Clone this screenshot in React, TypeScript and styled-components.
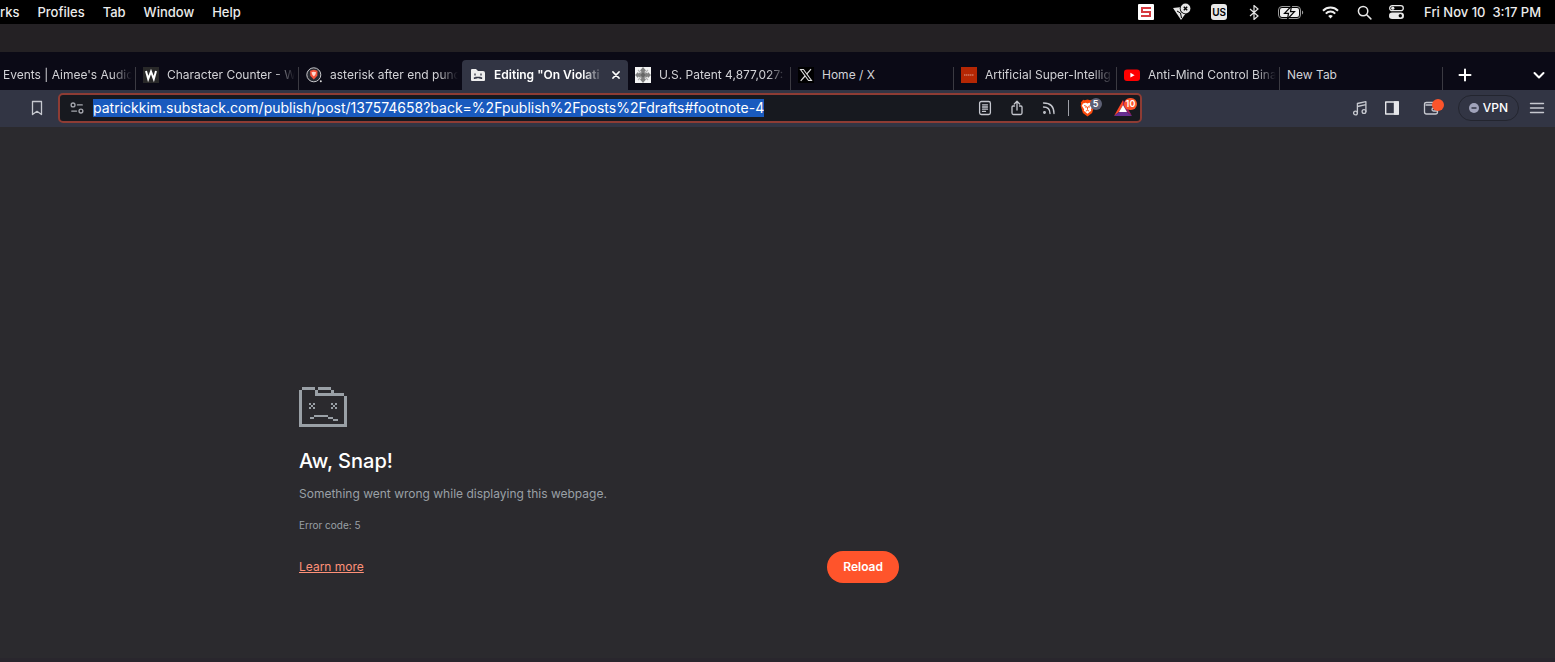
import React from "react";
import styled, { createGlobalStyle } from "styled-components";

const GlobalStyle = createGlobalStyle`
  * { box-sizing: border-box; }
  body {
    margin: 0;
    background: #2b2a2e;
    font-family: Inter, "Liberation Sans", sans-serif;
    color: #fff;
  }
  button, input { font: inherit; color: inherit; border: 0; background: none; padding: 0; margin: 0; }
  svg { display: block; flex: none; }
`;

const Screen = styled.div`
  display: flex;
  flex-direction: column;
  min-height: 100vh;
  border-bottom: 4px solid #29262d;
`;

const MenuBar = styled.header`
  display: flex;
  align-items: center;
  justify-content: space-between;
  height: 24px;
  padding-right: 14px;
  background: #000;
  color: #ececec;
  font-size: 13px;
  line-height: 16px;
  font-weight: 500;
  white-space: nowrap;
`;

const Menus = styled.nav`
  display: flex;
  gap: 18px;
`;

const MenuButton = styled.button`
  cursor: default;
`;

const StatusItems = styled.div`
  display: flex;
  align-items: center;
`;

const StatusItem = styled.span<{ $w: number }>`
  display: flex;
  justify-content: center;
  width: ${(p) => p.$w}px;
`;

const Clock = styled.time`
  white-space: pre;
  margin-left: 12px;
`;

const InputSource = styled.span`
  width: 16px;
  height: 16px;
  border-radius: 3px;
  background: #e8e8e8;
  color: #000;
  font-size: 10px;
  line-height: 17px;
  font-weight: 600;
  text-align: center;
`;

const TitleGap = styled.div`
  height: 28px;
  background: #242124;
`;

const TabStrip = styled.div`
  display: flex;
  height: 38px;
  padding-top: 8px;
  background: #0b0a16;
`;

const Tabs = styled.div`
  display: flex;
  flex: 1;
  min-width: 0;
`;

const Tab = styled.button<{ $active?: boolean; $clipped?: boolean; $edge?: boolean }>`
  position: relative;
  display: flex;
  align-items: center;
  gap: 8px;
  flex: ${(p) => (p.$clipped ? "0 0 136px" : p.$active ? "1 1 14px" : "1 1 0")};
  min-width: 0;
  height: 30px;
  padding: 0 4px 0 ${(p) => (p.$clipped ? 3 : p.$active ? 8 : 7)}px;
  border-radius: ${(p) => (p.$active ? "4px 4px 0 0" : "0")};
  background: ${(p) => (p.$active ? "#323544" : "transparent")};
  color: ${(p) => (p.$active ? "#fff" : "#d2d2d6")};
  font-size: 12px;
  line-height: 16px;
  font-weight: ${(p) => (p.$active ? 600 : 400)};
  text-align: left;

  &::after {
    content: "";
    display: ${(p) => (p.$edge ? "block" : "none")};
    position: absolute;
    right: 0;
    top: 7px;
    bottom: 0;
    width: 1px;
    background: #3b3a42;
  }
`;

const TabTitle = styled.span<{ $fade?: boolean }>`
  flex: 1;
  min-width: 0;
  overflow: hidden;
  white-space: nowrap;
  mask-image: ${(p) =>
    p.$fade ? "linear-gradient(to left, transparent, #000 20px)" : "none"};
`;

const CloseMark = styled.span`
  padding: 0 3px 0 0;
`;

const StripActions = styled.div`
  display: flex;
  align-items: center;
  justify-content: space-between;
  width: 112px;
  height: 30px;
  padding: 0 8px 0 14px;
`;

const IconButton = styled.button`
  display: flex;
  align-items: center;
  justify-content: center;
`;

const Toolbar = styled.div`
  display: flex;
  align-items: center;
  height: 37px;
  padding: 0 10px 1px 29px;
  background: #323544;
`;

const AddressBar = styled.div`
  display: flex;
  align-items: center;
  flex: 1083 1 0;
  min-width: 0;
  height: 30px;
  margin-left: 13px;
  padding: 0 2px 0 10px;
  border: 2px solid #8e3c34;
  border-radius: 5px;
  background: #17191f;
`;

const AddressInput = styled.input`
  field-sizing: content;
  min-width: 0;
  height: 18px;
  margin-left: 9px;
  background: #195abe;
  color: #fff;
  font-size: 14px;
  line-height: 18px;
  font-weight: 400;
  outline: 0;
`;

const AddressActions = styled.div`
  display: flex;
  align-items: center;
  margin-left: auto;
`;

const ActionButton = styled(IconButton)`
  width: 32px;
  height: 26px;
`;

const Divider = styled.span`
  width: 1px;
  height: 16px;
  margin: 0 8px 0 3px;
  background: #9fa1a8;
`;

const Extension = styled.button<{ $w: number }>`
  position: relative;
  display: flex;
  align-items: center;
  width: ${(p) => p.$w}px;
  height: 26px;
  padding-left: 3px;
`;

const Badge = styled.span<{ $bg: string; $left: number }>`
  position: absolute;
  top: 3px;
  left: ${(p) => p.$left}px;
  min-width: 12px;
  height: 12px;
  padding: 0 2px;
  border-radius: 6px;
  background: ${(p) => p.$bg};
  font-size: 9px;
  line-height: 12px;
  font-weight: 600;
  text-align: center;
`;

const ToolbarSpace = styled.div`
  flex: 205 1 0;
`;

const Wallet = styled(IconButton)`
  position: relative;
  width: 46px;
  height: 26px;
`;

const WalletDot = styled.span`
  position: absolute;
  top: 4px;
  left: 24px;
  width: 12px;
  height: 12px;
  border-radius: 6px;
  background: #fb542b;
`;

const VpnButton = styled.button`
  display: flex;
  align-items: center;
  gap: 4px;
  height: 26px;
  margin: 0 10px 0 4px;
  padding: 0 10px;
  border: 1px solid #23252f;
  border-radius: 13px;
  font-size: 12px;
  line-height: 16px;
  font-weight: 500;
  white-space: nowrap;
`;

const ErrorPage = styled.main`
  width: 100%;
  max-width: 899px;
  padding: 260px 0 0 299px;
`;

const Heading = styled.h1`
  margin: 20px 0 0;
  font-size: 20px;
  line-height: 28px;
  font-weight: 500;
`;

const Message = styled.p`
  margin: 10px 0 0;
  color: #9aa0a6;
  font-size: 12px;
  line-height: 18px;
`;

const ErrorCode = styled.p`
  margin: 15px 0 0;
  color: #9aa0a6;
  font-size: 10px;
  line-height: 14px;
`;

const Actions = styled.div`
  display: flex;
  align-items: center;
  justify-content: space-between;
  margin-top: 19px;
`;

const LearnMore = styled.a`
  color: #ff9179;
  font-size: 12px;
  line-height: 16px;
`;

const ReloadButton = styled.button`
  height: 32px;
  padding: 0 16px;
  border-radius: 16px;
  background: #ff542b;
  font-size: 12px;
  line-height: 16px;
  font-weight: 600;
`;

const Stroke = ({ size = 16, children, width = 1.3, color = "#c6c8cf" }: {
  size?: number; children: React.ReactNode; width?: number; color?: string;
}) => (
  <svg width={size} height={size} viewBox="0 0 16 16" fill="none" stroke={color}
    strokeWidth={width} strokeLinecap="round" strokeLinejoin="round" aria-hidden="true">
    {children}
  </svg>
);

const SIcon = () => (
  <svg width="16" height="16" viewBox="0 0 16 16" aria-hidden="true">
    <rect width="16" height="16" rx="1" fill="#fff" />
    <path d="M13 4H4v4h8v4H3" fill="none" stroke="#d63a40" strokeWidth="2" />
  </svg>
);

const FunnelIcon = () => (
  <svg width="19" height="18" viewBox="0 0 19 18" aria-hidden="true">
    <path d="M1 5 10 4l4 6-5 7z" fill="#e4e4e4" />
    <path d="m5 8 3.500 2 1 5" stroke="#000" strokeWidth="1" fill="none" />
    <circle cx="13.5" cy="5.5" r="5.8" fill="#000" />
    <circle cx="13.5" cy="5.5" r="4.9" fill="#e4e4e4" />
    <path d="m11.8 3.8 3.4 3.4m0-3.4-3.4 3.4" stroke="#000" strokeWidth="1.4" />
  </svg>
);

const BatteryIcon = () => (
  <svg width="26" height="13" viewBox="0 0 26 13" aria-hidden="true">
    <rect x=".5" y=".5" width="22" height="12" rx="3.5" fill="none" stroke="#9a9a9a" />
    <rect x="2" y="2" width="19" height="9" rx="2" fill="#eee" />
    <path d="M24 4.5c1.6.5 1.6 3.5 0 4z" fill="#9a9a9a" />
    <path d="m13.5 0-7 7.3h4L9.5 13l7-7.3h-4z" fill="#eee" stroke="#000" strokeWidth="1.2" />
  </svg>
);

const WifiIcon = () => (
  <svg width="17" height="13" viewBox="0 0 17 13" fill="none" stroke="#eee" strokeWidth="2" aria-hidden="true">
    <path d="M1 4.700c4.200-4.200 10.800-4.200 15 0M3.800 7.600c2.700-2.700 6.700-2.700 9.400 0" />
    <path d="m8.500 12.500-2.300-2.600c1.300-1.100 3.300-1.100 4.600 0z" fill="#eee" stroke="none" />
  </svg>
);

const ControlIcon = () => (
  <svg width="15" height="14" viewBox="0 0 15 14" aria-hidden="true">
    <rect x=".7" y=".7" width="13.6" height="5" rx="2.5" fill="none" stroke="#e8e8e8" strokeWidth="1.3" />
    <circle cx="3.8" cy="3.2" r="1.6" fill="#e8e8e8" />
    <rect y="7.5" width="15" height="6.5" rx="3.2" fill="#e8e8e8" />
    <circle cx="11.3" cy="10.7" r="1.7" fill="#000" />
  </svg>
);

const WIcon = () => (
  <svg width="16" height="16" viewBox="0 0 16 16" aria-hidden="true">
    <rect width="16" height="16" fill="#292929" />
    <path d="m3 4 2.200 8L8 4.500l2.800 7.500L13 4" fill="none" stroke="#fff" strokeWidth="2" />
  </svg>
);

const lionPath = "M8 .5 10.500 1l1.300-.3L14 3l-.4 1.200.5 1.800-2 6.500L8 15.500l-4.100-3L1.900 6l.5-1.800L2 3 4.200.7l1.300.3z";

const Lion = () => (
  <svg width="15" height="18" viewBox="1.5 0 13 16" aria-hidden="true">
    <path d={lionPath} fill="#fb4a0c" />
    <path d="m4 4 2.500-.7L8 4l1.500-.7L12 4l1 2-2 3 .3 1.500L8 13l-3.300-2.500L5 9 3 6z" fill="#fff" />
    <path d="m5 5.800 2 .7L6.500 8M11 5.800l-2 .7.5 1.500M8 7v2.500M6.500 10.800 8 10l1.500.8" fill="none" stroke="#fb4a0c" strokeWidth=".8" />
  </svg>
);

const BraveSearchIcon = () => (
  <svg width="16" height="16" viewBox="0 0 16 16" aria-hidden="true">
    <circle cx="7.8" cy="7.8" r="7" fill="#282a32" stroke="#c8c8cc" strokeWidth="1" />
    <path d="m7.800 2.800 3.700 1-.2 5L7.800 12.500l-3.500-3.700-.2-5z" fill="#f4533a" />
    <path d="m5.500 5.300 2.300-.5 2.300.5-.8 2.500-1.500 1.800-1.500-1.800z" fill="#ffd9d0" />
    <circle cx="14.8" cy="14.3" r="1" fill="#ddd" />
  </svg>
);

const SadTabIcon = () => (
  <svg width="16" height="16" viewBox="0 0 16 16" aria-hidden="true">
    <path d="M1 3q0-1 1-1h4l2 2h5q2 0 2 2v7q0 1-1 1H2q-1 0-1-1z" fill="#eee" />
    <path d="M5 6.500v2M11 6.500v2M4.500 12v-1h1.500v-.5h4v.5h1.500v1" stroke="#323544" strokeWidth="1.3" fill="none" />
  </svg>
);

const PatentIcon = () => (
  <svg width="16" height="16" viewBox="0 0 16 16" aria-hidden="true">
    <rect width="16" height="16" fill="#f3f3f3" />
    <path d="m8 0 3 3.500-1.500 1 3 2L13 5l3 3-3 3-.5-1.500-3 2 1.500 1L8 16l-3-3.500 1.500-1-3-2L3 11 0 8l3-3 .5 1.500 3-2-1.500-1z" fill="#808080" />
    <path d="m3 3 10 10m0-10L3 13" stroke="#b4b4b4" strokeWidth="1.2" />
    <circle cx="8" cy="8" r="2.2" fill="#666" />
  </svg>
);

const XIcon = () => (
  <svg width="16" height="16" viewBox="0 0 16 16" aria-hidden="true">
    <rect width="16" height="16" fill="#000" />
    <path d="M2.500 2.500h3l8 11h-3z" fill="none" stroke="#ddd" strokeWidth="1.1" />
    <path d="M13 2.200 8.700 7.100M7 9l-4.300 4.800" stroke="#ddd" strokeWidth="1.2" />
  </svg>
);

const RedIcon = () => (
  <svg width="16" height="16" viewBox="0 0 16 16" aria-hidden="true">
    <rect width="16" height="16" fill="#b52704" />
    <path d="M3 8h10" stroke="#e0a08c" strokeWidth="1.2" strokeDasharray="1.5 .5" />
  </svg>
);

const YouTubeIcon = () => (
  <svg width="16" height="16" viewBox="0 0 16 16" aria-hidden="true">
    <rect y="2.5" width="16" height="11.5" rx="3" fill="#f00" />
    <path d="m6.400 5.800 4.200 2.400-4.200 2.400z" fill="#fff" />
  </svg>
);

const SadFolder = () => (
  <svg width="48" height="40" viewBox="0 0 48 40" fill="#9aa0a6" shapeRendering="crispEdges" aria-hidden="true">
    <path d="M3 0h13v3H3zM19 0h13v3H19zM0 3h3v34h42V9H16V3h3v3h26v3h3v31H0zM32 3h3v3h-3z" />
    <path d="M10 16h2v2h-2zM14 16h2v2h-2zM12 18h2v2h-2zM10 20h2v2h-2zM14 20h2v2h-2z" />
    <path d="M32 16h2v2h-2zM36 16h2v2h-2zM34 18h2v2h-2zM32 20h2v2h-2zM36 20h2v2h-2z" />
    <path d="M15 28h14v2H15zM11 30h4v2h-4zM29 30h5v2h-5zM34 32h5v2h-5z" />
  </svg>
);

const tabs = [
  { title: "Events | Aimee's Audio", clipped: true, fade: true, edge: true },
  { title: "Character Counter - W", icon: <WIcon />, fade: true, edge: true },
  { title: "asterisk after end punc", icon: <BraveSearchIcon />, fade: true },
  { title: "Editing \"On Violati", icon: <SadTabIcon />, fade: true, active: true },
  { title: "U.S. Patent 4,877,027:", icon: <PatentIcon />, fade: true, edge: true },
  { title: "Home / X", icon: <XIcon />, edge: true },
  { title: "Artificial Super-Intellig", icon: <RedIcon />, fade: true, edge: true },
  { title: "Anti-Mind Control Bina", icon: <YouTubeIcon />, fade: true, edge: true },
  { title: "New Tab", edge: true },
];

export default function App() {
  return (
    <Screen>
      <GlobalStyle />
      <MenuBar>
        <Menus>
          {["rks", "Profiles", "Tab", "Window", "Help"].map((m) => (
            <MenuButton key={m}>{m}</MenuButton>
          ))}
        </Menus>
        <StatusItems>
          <StatusItem $w={32}><SIcon /></StatusItem>
          <StatusItem $w={38}><FunnelIcon /></StatusItem>
          <StatusItem $w={38}><InputSource>US</InputSource></StatusItem>
          <StatusItem $w={32}>
            <svg width="10" height="15" viewBox="0 0 10 15" fill="none" stroke="#e4e4e4" strokeWidth="1.2" aria-hidden="true">
              <path d="m1 4 8 7-4 3.500V.5L9 4l-8 7" />
            </svg>
          </StatusItem>
          <StatusItem $w={42}><BatteryIcon /></StatusItem>
          <StatusItem $w={36}><WifiIcon /></StatusItem>
          <StatusItem $w={32}>
            <Stroke size={15} width={1.6} color="#e8e8e8"><circle cx="6.5" cy="6.5" r="5" /><path d="m10.300 10.300 4.500 4.500" /></Stroke>
          </StatusItem>
          <StatusItem $w={32}><ControlIcon /></StatusItem>
          <Clock>{"Fri Nov 10  3:17 PM"}</Clock>
        </StatusItems>
      </MenuBar>
      <TitleGap />
      <TabStrip>
        <Tabs role="tablist">
          {tabs.map((t) => (
            <Tab key={t.title} role="tab" aria-selected={!!t.active} $active={t.active} $clipped={t.clipped} $edge={t.edge}>
              {t.icon}
              <TabTitle $fade={t.fade}>{t.title}</TabTitle>
              {t.active && (
                <CloseMark>
                  <Stroke size={10} width={2.4} color="#fff"><path d="m3 3 10 10M13 3 3 13" /></Stroke>
                </CloseMark>
              )}
            </Tab>
          ))}
        </Tabs>
        <StripActions>
          <IconButton aria-label="New tab">
            <Stroke width={2} color="#fff"><path d="M8 2.500v11M2.500 8h11" /></Stroke>
          </IconButton>
          <IconButton aria-label="Search tabs">
            <Stroke width={2} color="#fff"><path d="m3.500 6 4.500 4.500L12.500 6" /></Stroke>
          </IconButton>
        </StripActions>
      </TabStrip>
      <Toolbar>
        <IconButton aria-label="Bookmark this page">
          <Stroke><path d="M3.500 1.500h9v13L8 11.300l-4.500 3.200z" /></Stroke>
        </IconButton>
        <AddressBar>
          <IconButton aria-label="Site settings">
            <Stroke size={14} width={1.5} color="#a5a7ae"><circle cx="3.5" cy="4.5" r="2.2" /><path d="M8.500 4.500H14M2 11.500h5.500" /><circle cx="12.5" cy="11.5" r="2.2" /></Stroke>
          </IconButton>
          <AddressInput
            aria-label="Address"
            spellCheck={false}
            defaultValue="patrickkim.substack.com/publish/post/137574658?back=%2Fpublish%2Fposts%2Fdrafts#footnote-4"
          />
          <AddressActions>
            <ActionButton aria-label="Reader mode">
              <Stroke><rect x="2.6" y="1.5" width="10.8" height="13" rx="1.8" /><path d="M5.500 4.800h5M5.500 7h5M5.500 9.200h5M5.500 11.400h3" /></Stroke>
            </ActionButton>
            <ActionButton aria-label="Share">
              <Stroke><path d="M5.500 6H4q-1 0-1 1v6q0 1.500 1.500 1.500h7Q13 14.500 13 13V7q0-1-1-1h-1.500M8 10V1.500M5.300 4 8 1.300 10.700 4" /></Stroke>
            </ActionButton>
            <ActionButton aria-label="Feed">
              <Stroke><path d="M2.500 3q10.500 0 10.500 10.500M2.500 7q6.500 0 6.500 6.500" /><circle cx="3.5" cy="12.5" r=".8" /></Stroke>
            </ActionButton>
            <Divider />
            <Extension aria-label="Shields" $w={34}>
              <Lion />
              <Badge $bg="#5e6175" $left={13}>5</Badge>
            </Extension>
            <Extension aria-label="Rewards" $w={27}>
              <svg width="18" height="16" viewBox="0 0 18 16" aria-hidden="true">
                <path d="M9 0v5L5 12l-5 4z" fill="#ff4724" />
                <path d="M9 0v5l4 7 5 4z" fill="#9e1f63" />
                <path d="M0 16h18l-5-4H5z" fill="#662d91" />
                <path d="m9 5 4 7H5z" fill="#fff" />
              </svg>
              <Badge $bg="#fb542b" $left={13}>10</Badge>
            </Extension>
          </AddressActions>
        </AddressBar>
        <ToolbarSpace />
        <ActionButton aria-label="Playlist">
          <Stroke><circle cx="3.5" cy="13" r="1.9" /><circle cx="12" cy="11.5" r="1.9" /><path d="M5.400 13V3.500l8.500-1.800v9.800M5.400 6.500l8.500-1.800" /></Stroke>
        </ActionButton>
        <ActionButton aria-label="Sidebar">
          <Stroke width={1.4} color="#e6e7ea"><path d="M1.700 2h12.600v12H1.700z" /><path d="M10.500 2h3.800v12h-3.800z" fill="#e6e7ea" /></Stroke>
        </ActionButton>
        <Wallet aria-label="Wallet">
          <Stroke><path d="M14 5.500V4q0-1.500-1.500-1.500h-9Q1.500 2.500 1.500 4v8q0 2 2 2h9q2 0 2-2V5H3M14.500 8h-4q-1.500 0-1.500 1.500T10.500 11h4" /></Stroke>
          <WalletDot />
        </Wallet>
        <VpnButton>
          <svg width="10" height="10" viewBox="0 0 10 10" aria-hidden="true">
            <circle cx="5" cy="5" r="5" fill="#a0a3ba" /><path d="M2.500 5h5" stroke="#323544" strokeWidth="1.5" />
          </svg>
          VPN
        </VpnButton>
        <IconButton aria-label="Menu">
          <Stroke width={1.4}><path d="M1.500 3.500h13M1.500 8h13M1.500 12.500h13" /></Stroke>
        </IconButton>
      </Toolbar>
      <ErrorPage>
        <SadFolder />
        <Heading>Aw, Snap!</Heading>
        <Message>Something went wrong while displaying this webpage.</Message>
        <ErrorCode>Error code: 5</ErrorCode>
        <Actions>
          <LearnMore href="#learn-more">Learn more</LearnMore>
          <ReloadButton>Reload</ReloadButton>
        </Actions>
      </ErrorPage>
    </Screen>
  );
}
